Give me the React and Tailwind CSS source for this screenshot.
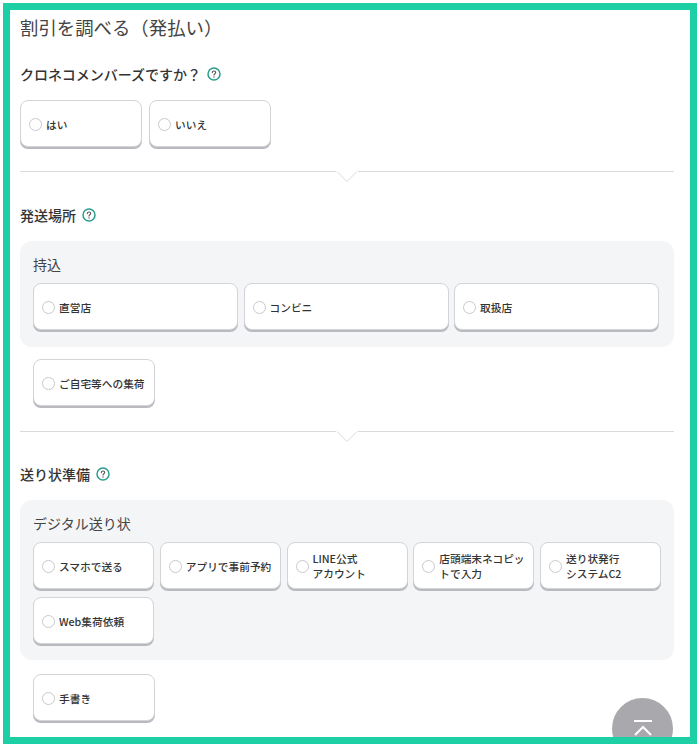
import React from 'react';

const HelpIcon = () => (
  <svg width="14" height="14" viewBox="0 0 14 14" fill="none" className="ml-[6px] shrink-0">
    <circle cx="7" cy="7" r="6" stroke="#2a9d8f" strokeWidth="1.5" />
    <path d="M5.3 5.6c0-1 .8-1.6 1.7-1.6s1.7.6 1.7 1.5c0 1.2-1.7 1.3-1.7 2.6" stroke="#555" strokeWidth="1.1" strokeLinecap="round" />
    <circle cx="7" cy="10" r=".7" fill="#555" />
  </svg>
);

const Heading = ({ children, className = '' }) => (
  <div className={`flex h-5 items-center text-[14px] font-medium leading-5 text-[#333] ${className}`}>
    {children}
    <HelpIcon />
  </div>
);

const Divider = ({ className = '' }) => (
  <div className={`relative h-px bg-[#d9dadb] ${className}`}>
    <svg width="22" height="12" viewBox="0 0 22 12" className="absolute left-[316px] top-0">
      <path d="M0 0H22V1H21L11 11L1 1H0Z" fill="#fff" />
      <path d="M1 .5L11 10.5L21 .5" fill="none" stroke="#d9dadb" />
    </svg>
  </div>
);

const Option = ({ label, className = '' }) => (
  <label className={`flex h-[47px] items-center rounded-lg border border-[#d3d4d8] bg-white pl-[8px] pr-1 pt-[1px] text-[10.7px] font-medium leading-[15px] text-[#333] shadow-[0_2px_0_#b9babf] ${className}`}>
    <span className="mr-[4px] size-[13px] shrink-0 rounded-full border border-[#c8c9cc] bg-white" />
    <span>{label}</span>
  </label>
);

const Panel = ({ title, className = '', children }) => (
  <div className={`rounded-xl bg-[#f4f5f7] px-[13px] pt-[14px] ${className}`}>
    <div className="mb-[9px] h-[19px] text-[14px] leading-[19px] text-[#444]">{title}</div>
    {children}
  </div>
);

export default function App() {
  return (
    <div
      className="bg-white pl-[3px] pt-[3px] pr-[3px] text-[#333]"
      style={{ fontFamily: '"Noto Sans CJK JP", "Noto Sans", sans-serif' }}
    >
      <div className="relative h-[741px] overflow-hidden border-[7px] border-[#1ccfa5] bg-white pl-[10px] pr-[16px]">
        <h1 className="pt-[5px] text-[18.4px] font-normal leading-[24px] text-[#444]">割引を調べる（発払い）</h1>

        <Heading className="mt-[25px]">クロネコメンバーズですか？</Heading>
        <div className="mt-[16px] flex gap-[7px]">
          <Option label="はい" className="w-[122px]" />
          <Option label="いいえ" className="w-[122px]" />
        </div>
        <Divider className="mt-[24px]" />

        <Heading className="mt-[33px]">発送場所</Heading>
        <Panel title="持込" className="mt-[16px] h-[106px]">
          <div className="flex gap-[5.5px]">
            <Option label="直営店" className="w-[205px]" />
            <Option label="コンビニ" className="w-[205px]" />
            <Option label="取扱店" className="w-[205px]" />
          </div>
        </Panel>
        <div className="mt-[12px] pl-[13px]">
          <Option label="ご自宅等への集荷" className="w-[122px]" />
        </div>
        <Divider className="mt-[25px]" />

        <Heading className="mt-[32px]">送り状準備</Heading>
        <Panel title="デジタル送り状" className="mt-[16px] h-[160px]">
          <div className="grid grid-cols-[121px_121px_121px_121px_121px] gap-x-[5.75px] gap-y-[8px]">
            <Option label="スマホで送る" />
            <Option label="アプリで事前予約" />
            <Option label={<>LINE公式<br />アカウント</>} />
            <Option label="店頭端末ネコピットで入力" />
            <Option label={<>送り状発行<br />システムC2</>} />
            <Option label="Web集荷依頼" />
          </div>
        </Panel>
        <div className="mt-[14px] pl-[13px]">
          <Option label="手書き" className="w-[122px]" />
        </div>

        <button className="absolute left-[602px] top-[688px] flex size-[61px] flex-col items-center rounded-full bg-[#a9a9ad] pt-[22px]" aria-label="ページトップへ">
          <svg width="22" height="18" viewBox="0 0 22 18" fill="none" stroke="#fff" strokeWidth="2">
            <path d="M2 1H20" />
            <path d="M3 15L11 7L19 15" />
          </svg>
        </button>
      </div>
    </div>
  );
}
